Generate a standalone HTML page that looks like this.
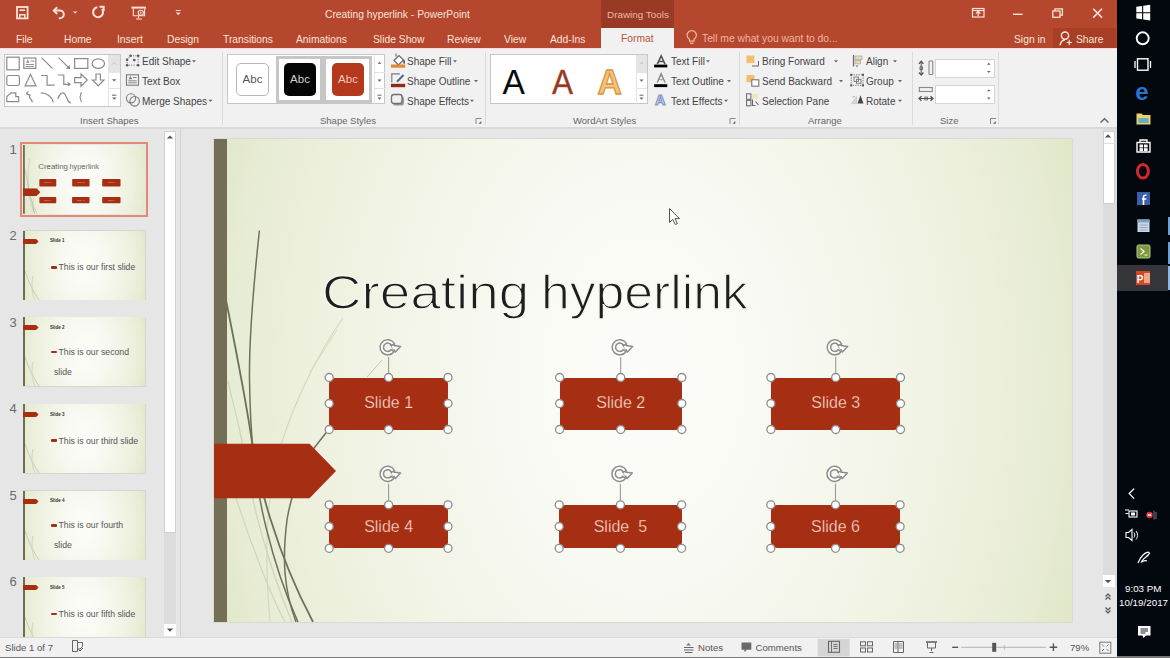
<!DOCTYPE html>
<html><head><meta charset="utf-8">
<style>
*{margin:0;padding:0;box-sizing:border-box}
html,body{width:1170px;height:658px;overflow:hidden;background:#e6e6e6;font-family:"Liberation Sans",sans-serif}
.a{position:absolute}
.t{position:absolute;white-space:nowrap;line-height:1}
#title{left:0;top:0;width:1117px;height:48px;background:#b4472d}
.tab{color:#fbe3da;font-size:10.3px;top:34.5px}
.rb{color:#444;font-size:10px}
.lbl{color:#666;font-size:9.5px;top:116px}
.sep{position:absolute;top:52px;width:1px;height:73px;background:#dadada}
.gal{position:absolute;background:#fff;border:1px solid #c6c6c6}
.scr{position:absolute;background:#fff;border-left:1px solid #dcdcdc}
.thumb{position:absolute;left:23px;width:122px;height:69px;border:1px solid #d4d4d4;overflow:hidden;
 background:radial-gradient(ellipse at 50% 55%,#fdfdf8 0%,#f3f4e8 50%,#e3e8c8 100%)}
.tnum{position:absolute;left:9.5px;color:#666;font-size:13px;line-height:1}
.shape{position:absolute;background:#a62e12;border-radius:6px;color:#f6d4c6;font-size:15.3px;text-align:center}
.h{position:absolute;width:9px;height:9px;border-radius:50%;background:#fff;border:1.3px solid #8a8a8a}
</style></head><body>

<!-- TITLE BAR -->
<div id="title" class="a"></div>
<div class="a" style="left:601px;top:0;width:73px;height:28px;background:#983a24"></div>
<div class="t" style="left:607px;top:9.6px;font-size:9.9px;color:#eab9a8">Drawing Tools</div>
<div class="t" style="left:325px;top:10px;font-size:10.3px;color:#fbe3da">Creating hyperlink - PowerPoint</div>


<div class="a" style="left:1053px;top:28px;width:63px;height:20px;background:#a63f25"></div>
<svg class="a" style="left:0;top:0" width="1117" height="48" fill="none" stroke="#fbe2d8" stroke-width="1.4">
 <!-- save -->
 <rect x="17" y="7" width="10.6" height="11.4" stroke-width="1.8"/>
 <path d="M19.5 10.2h5.6" stroke-width="1.6"/>
 <path d="M19.8 18.3v-3.6h5v3.6" stroke-width="1.5"/>
 <!-- undo -->
 <path d="M54 10.6h6a3.8 3.8 0 0 1 0 7.6h-1.2" stroke-width="2"/>
 <path d="M57.2 7.2l-3.4 3.4l3.4 3.4" stroke-width="2"/>
 <path d="M72.8 11.4h4.7l-2.35 2.2z" fill="#fbe2d8" stroke="none"/>
 <!-- redo (circular) -->
 <path d="M102 9.2a5 5 0 1 1 -4.6 -1.9" stroke-width="2.1"/>
 <path d="M99.5 6.8h4.2v4.2" stroke-width="1.9"/>
 <!-- present from start -->
 <path d="M131.5 7.6h14.4" stroke-width="2"/>
 <path d="M133.3 8.5v7.3h11.3v-7.3" stroke-width="1.1"/>
 <circle cx="140.8" cy="12.8" r="2.6" stroke-width="1.1"/>
 <path d="M140 11.6l2 1.2l-2 1.2z" fill="#fbe2d8" stroke="none"/>
 <path d="M138.5 16v2.5M136 19h6" stroke-width="1"/>
 <!-- customize -->
 <path d="M175.8 10.5h4.8" stroke-width="1"/>
 <path d="M175.8 12.6h4.8l-2.4 2.7z" fill="#fbe2d8" stroke="none"/>
 <!-- ribbon display options -->
 <rect x="972.5" y="8.5" width="11.5" height="8.5" stroke-width="1.2"/>
 <path d="M972.5 10.5h11.5" stroke-width="1.2"/>
 <path d="M978.2 16v-4.5M976 13.5l2.2-2.2l2.2 2.2" stroke-width="1.2"/>
 <!-- minimize -->
 <path d="M1013 14.3h9.6" stroke-width="1.4"/>
 <!-- restore -->
 <rect x="1052.8" y="11" width="7.2" height="6.3" stroke-width="1.3"/>
 <path d="M1055 11v-2.2h7.4v6.4h-2.4" stroke-width="1.3"/>
 <!-- close -->
 <path d="M1093.2 8.8l8.8 8.8M1102 8.8l-8.8 8.8" stroke-width="1.6"/>
 <!-- lightbulb -->
 <path d="M689.5 41.2v-2a4.6 4.6 0 1 1 4.5 0v2z" stroke="#f2b5a2" stroke-width="1.2"/>
 <path d="M690 43.3h3.6" stroke="#f2b5a2" stroke-width="1.2"/>
 <!-- person -->
 <circle cx="1065" cy="35.6" r="3.6" stroke-width="1.5"/>
 <path d="M1060 45.2c0.8-3.2 2.6-5.3 5-5.5" stroke-width="1.5"/>
 <path d="M1066.5 42.5h5.5M1069.2 39.8v5.5" stroke-width="1.2"/>
</svg>

<!-- tabs -->
<div class="t tab" style="left:16px">File</div>
<div class="t tab" style="left:64px">Home</div>
<div class="t tab" style="left:117px">Insert</div>
<div class="t tab" style="left:167px">Design</div>
<div class="t tab" style="left:223px">Transitions</div>
<div class="t tab" style="left:296px">Animations</div>
<div class="t tab" style="left:373px">Slide Show</div>
<div class="t tab" style="left:447px">Review</div>
<div class="t tab" style="left:504px">View</div>
<div class="t tab" style="left:550px">Add-Ins</div>
<div class="a" style="left:601px;top:28px;width:73px;height:22px;background:#f1f1f1"></div>
<div class="t" style="left:621px;top:34px;font-size:10.3px;color:#b9553c">Format</div>
<div class="t" style="left:702px;top:34px;font-size:10.3px;color:#f2b5a2">Tell me what you want to do...</div>
<div class="t tab" style="left:1014px">Sign in</div>

<div class="t tab" style="left:1076px">Share</div>

<!-- RIBBON -->
<div class="a" style="left:0;top:48px;width:1117px;height:79px;background:#f1f1f1;border-top:1px solid #f6dcd4"></div>
<div class="a" style="left:0;top:127px;width:1117px;height:2px;background:#d8d8d8"></div>
<div class="a" style="left:601px;top:48px;width:73px;height:1px;background:#f1f1f1"></div>

<!-- Insert shapes -->
<div class="gal" style="left:4px;top:54px;width:117px;height:53px"></div>
<div class="a" style="left:108px;top:55px;width:1px;height:51px;background:#e4e4e4"></div><div class="a" style="left:109px;top:55px;width:11px;height:18px;background:#e4e4e4"></div><div class="a" style="left:109px;top:88px;width:11px;height:1px;background:#e4e4e4"></div>
<div class="t lbl" style="left:80px">Insert Shapes</div>
<svg class="a" style="left:0;top:48px" width="222" height="79" fill="none" stroke="#8a8a8a" stroke-width="1.2">
 <g transform="translate(0,-48)">
 <!-- row1 -->
 <rect x="6.8" y="57.2" width="12.4" height="12.6"/>
 <rect x="23.8" y="58" width="12" height="10.4"/>
 <path d="M25.5 64.5h8.5M25.5 66.5h8.5" stroke-width="0.9"/>
 <path d="M26 62.8l1.8-3.2l1.8 3.2z" fill="#8a8a8a" stroke="none"/>
 <path d="M30.5 61h4" stroke-width="0.9"/>
 <path d="M41.5 57.6l11.1 11"/>
 <path d="M58.6 57.6l10.5 10.5"/>
 <path d="M70.2 69.2l-0.6-4.3l-3.7 3.7z" fill="#8a8a8a" stroke="none"/>
 <rect x="74.6" y="58.6" width="13.2" height="9.8"/>
 <ellipse cx="98.3" cy="63.6" rx="6.2" ry="4.8"/>
 <!-- row2 -->
 <rect x="6.8" y="75.5" width="12.6" height="10" rx="1.8"/>
 <path d="M30.5 74.3l-5.4 11.5h10.8z"/>
 <path d="M41.1 75.5h6v9.7h7.5"/>
 <path d="M57.8 75h6v9.3h5"/>
 <path d="M71.2 84.3l-3.4-2.2v4.4z" fill="#8a8a8a" stroke="none"/>
 <path d="M74.6 77.6h6.4v-3.6l6.2 6.1l-6.2 6.1v-3.6h-6.4z"/>
 <path d="M96 74h4.4v6h3.6l-5.8 6l-5.8-6h3.6z"/>
 <!-- row3 -->
 <path d="M6.8 101.7v-5.2l4.2-3.6h4.8v3.8h2.8v5z"/>
 <path d="M28.5 91.5c-2.5 1.5-2.5 3 0.5 3.2c2.8 0.3-1 2.2 1 3.5c2 1.2 1.5 2.5 2.5 4" stroke-width="1.3"/>
 <path d="M40.8 92.8c5.5 0 11 3.5 12.6 9.5"/>
 <path d="M57.8 98.8c1.5-4 3-6 5-6c2.5 0 3.5 4 4.5 6.5c1 2.5 2 3.5 3.5 3.5"/>
 <path d="M81.8 92.6c-1.2 0.3-1.3 1.5-1.3 3c0 1.2-0.3 1.5-1 1.6c0.7 0.1 1 0.4 1 1.6c0 1.5 0.1 2.8 1.3 3.1" stroke-width="1.1"/>
 <!-- scroll arrows -->
 <path d="M112 64.6l2.2-2.2l2.2 2.2" stroke="#c4c4c4" stroke-width="1"/>
 <path d="M112 79.2h4.4l-2.2 2.4z" fill="#666" stroke="none"/>
 <path d="M112 95.2h4.4" stroke="#666" stroke-width="1"/>
 <path d="M112 97.4h4.4l-2.2 2.4z" fill="#666" stroke="none"/>
 </g>
</svg>

<div class="t rb" style="left:142px;top:57px">Edit Shape</div>
<div class="t rb" style="left:142px;top:76.7px">Text Box</div>
<div class="t rb" style="left:142px;top:96.7px">Merge Shapes</div>

<svg class="a" style="left:120px;top:48px" width="102" height="79" fill="none" stroke="#7a7a7a" stroke-width="1.1">
 <g transform="translate(-120,-48)">
 <path d="M130.5 55.8h7.7M127.1 59.7v5.5h11.1v-9.4M127.1 59.7l3.4-3.9" stroke-dasharray="1.2 1.2" stroke="#6a6a6a" stroke-width="0.9"/>
 <g fill="#4f5b66" stroke="none">
 <circle cx="130.5" cy="55.8" r="1.3"/><circle cx="138.2" cy="55.8" r="1.3"/><circle cx="127.1" cy="59.7" r="1.3"/>
 <circle cx="134.3" cy="60.1" r="1.3"/><circle cx="127.1" cy="65.2" r="1.3"/><circle cx="138.2" cy="65.2" r="1.3"/>
 </g>
 <rect x="126.5" y="74.8" width="12" height="10.4"/>
 <path d="M128.3 80.8h8.5M128.3 82.8h8.5" stroke-width="0.9"/>
 <path d="M128.6 79.2l1.8-3.2l1.8 3.2z" fill="#7a7a7a" stroke="none"/>
 <path d="M133 77.5h3.6" stroke-width="0.9"/>
 <circle cx="131" cy="98.3" r="4.6"/>
 <circle cx="134.6" cy="101.3" r="4.8"/>
 <g fill="#666" stroke="none">
 <path d="M192 60.3h4l-2 2.2z"/>
 <path d="M208.5 99.8h4l-2 2.2z"/>
 </g>
 </g>
</svg>
<div class="sep" style="left:222px"></div>

<!-- Shape styles -->
<div class="gal" style="left:227px;top:54px;width:158px;height:50px"></div>

<div class="a" style="left:236px;top:63px;width:33px;height:33px;border:1px solid #b8b8b8;border-radius:5px;background:#fff"></div>
<div class="t" style="left:236px;width:33px;text-align:center;top:73.5px;font-size:11.5px;color:#555">Abc</div>
<div class="a" style="left:276px;top:56px;width:96px;height:47px;background:#c6c6c6"></div>
<div class="a" style="left:279px;top:59px;width:41px;height:41px;background:#fff"></div>
<div class="a" style="left:326px;top:59px;width:43px;height:41px;background:#fff"></div>
<div class="a" style="left:284px;top:63px;width:32px;height:33px;border-radius:5px;background:#050505"></div>
<div class="t" style="left:284px;width:32px;text-align:center;top:73.5px;font-size:11.5px;color:#d0d0d0">Abc</div>
<div class="a" style="left:332px;top:63px;width:32px;height:33px;border-radius:5px;background:#b3381c"></div>
<div class="t" style="left:332px;width:32px;text-align:center;top:73.5px;font-size:11.5px;color:#f3c8b8">Abc</div>
<div class="a" style="left:374px;top:55px;width:1px;height:49px;background:#e4e4e4"></div>
<div class="a" style="left:375px;top:72px;width:10px;height:1px;background:#e4e4e4"></div>
<div class="a" style="left:375px;top:88px;width:10px;height:1px;background:#e4e4e4"></div>
<svg class="a" style="left:374px;top:54px" width="12" height="52" fill="#666">
 <path d="M3.5 9.8l2-2l2 2z"/>
 <path d="M3.5 25.5h4l-2 2.2z"/>
 <path d="M3.5 41.2h4" stroke="#666" stroke-width="1"/>
 <path d="M3.5 43.5h4l-2 2.2z"/>
</svg>
<div class="t lbl" style="left:320px">Shape Styles</div>
<div class="t rb" style="left:407px;top:57px">Shape Fill</div>
<div class="t rb" style="left:407px;top:76.7px">Shape Outline</div>
<div class="t rb" style="left:407px;top:96.7px">Shape Effects</div>
<div class="sep" style="left:485px"></div>

<!-- WordArt -->
<div class="gal" style="left:490px;top:54px;width:158px;height:50px"></div>
<div class="t lbl" style="left:573px">WordArt Styles</div>
<div class="t rb" style="left:671px;top:57px">Text Fill</div>
<div class="t rb" style="left:671px;top:76.7px">Text Outline</div>
<div class="t rb" style="left:671px;top:96.7px">Text Effects</div>

<svg class="a" style="left:386px;top:48px" width="100" height="79" fill="none">
 <g transform="translate(-386,-48)">
 <!-- bucket -->
 <path d="M394 60.5l5-5l4.5 4.5l-5 5z" stroke="#666" stroke-width="1.2" fill="#fff"/>
 <path d="M396 56.5v-3" stroke="#666" stroke-width="1.1"/>
 <path d="M403.5 60c1 1.5 1 3 0 3.5" stroke="#555" stroke-width="1.5"/>
 <rect x="391" y="64.5" width="14.2" height="3.2" fill="#e08b32"/>
 <!-- outline -->
 <path d="M391.8 82.5v-8.6h8" stroke="#777" stroke-width="1.1"/>
 <path d="M403.5 75l-6.5 6.8" stroke="#4d6f8e" stroke-width="2"/>
 <rect x="391" y="83.8" width="14.2" height="3.4" fill="#8d2b1b"/>
 <!-- effects -->
 <rect x="393" y="96" width="11" height="9.5" rx="2.5" fill="#9a9a9a"/>
 <rect x="391.5" y="94.5" width="10.5" height="9" rx="2.5" fill="#f0f0f0" stroke="#707070" stroke-width="1.3"/>
 <!-- dropdowns -->
 <g fill="#666">
 <path d="M453 60.3h4l-2 2.2z"/>
 <path d="M474 80h4l-2 2.2z"/>
 <path d="M470 99.8h4l-2 2.2z"/>
 </g>
 <!-- launcher -->
 <path d="M476 124v-5.5h5.5" stroke="#888" stroke-width="1"/>
 <path d="M478.5 123.8l2.8-2.8v2.8z" fill="#666"/>
 </g>
</svg>
<svg class="a" style="left:490px;top:54px" width="160" height="52">
 <text x="12.5" y="40.5" font-family="Liberation Sans" font-size="35" fill="#0a0a0a" transform="translate(13,0) scale(0.96,1) translate(-13,0)">A</text>
 <text x="62" y="40.5" font-family="Liberation Sans" font-size="35" fill="#923623" stroke="#b55a44" stroke-width="0.5" transform="translate(62,0) scale(0.9,1) translate(-62,0)">A</text>
 <text x="107.5" y="40.5" font-family="Liberation Sans" font-size="35" font-weight="bold" fill="#f7c27a" stroke="#d69540" stroke-width="1.3" transform="translate(107.5,0) scale(0.96,1) translate(-107.5,0)">A</text>
</svg>
<div class="a" style="left:636px;top:55px;width:1px;height:49px;background:#e4e4e4"></div>
<div class="a" style="left:637px;top:55px;width:10px;height:18px;background:#e4e4e4"></div>
<div class="a" style="left:637px;top:88px;width:10px;height:1px;background:#e4e4e4"></div>
<svg class="a" style="left:636px;top:54px" width="12" height="52" fill="#666">
 <path d="M3.5 9.8l2-2l2 2z" fill="#c4c4c4"/>
 <path d="M3.5 25.5h4l-2 2.2z"/>
 <path d="M3.5 41.2h4" stroke="#666" stroke-width="1"/>
 <path d="M3.5 43.5h4l-2 2.2z"/>
</svg>
<svg class="a" style="left:650px;top:48px" width="90" height="79" fill="none">
 <g transform="translate(-650,-48)">
 <path d="M657.3 64.2l3.85-8.3l3.85 8.3M658.6 61.5h5" stroke="#555" stroke-width="1.6"/>
 <rect x="654.1" y="64.6" width="13.2" height="2.8" fill="#000"/>
 <path d="M657.3 82.5l3.85-8.6l3.85 8.6M658.6 79.5h5" stroke="#888" stroke-width="1.5"/>
 <path d="M658.8 82.5l2.35-5.5l2.35 5.5" stroke="#fff" stroke-width="0.6"/>
 <rect x="654.1" y="84.2" width="13.2" height="2.9" fill="#000"/>
 <text x="655" y="104.8" font-family="Liberation Sans" font-size="14.5" font-weight="bold" fill="#dfe6f6" stroke="#7f92c8" stroke-width="1.1">A</text>
 <g fill="#666">
 <path d="M706 60.3h4l-2 2.2z"/>
 <path d="M727 80h4l-2 2.2z"/>
 <path d="M724 99.8h4l-2 2.2z"/>
 </g>
 <path d="M730 124v-5.5h5.5" stroke="#888" stroke-width="1"/>
 <path d="M732.5 123.8l2.8-2.8v2.8z" fill="#666"/>
 </g>
</svg>
<div class="sep" style="left:739px"></div>

<!-- Arrange -->
<div class="t rb" style="left:762px;top:57px">Bring Forward</div>
<div class="t rb" style="left:762px;top:76.7px">Send Backward</div>
<div class="t rb" style="left:762px;top:96.7px">Selection Pane</div>
<div class="t rb" style="left:866px;top:57px">Align</div>
<div class="t rb" style="left:866px;top:76.7px">Group</div>
<div class="t rb" style="left:866px;top:96.7px">Rotate</div>
<div class="t lbl" style="left:808px">Arrange</div>
<div class="sep" style="left:912px"></div>

<!-- Size -->
<div class="a" style="left:935px;top:59px;width:60px;height:19px;background:#fff;border:1px solid #d4d4d4"></div>
<div class="a" style="left:935px;top:85px;width:60px;height:19px;background:#fff;border:1px solid #d4d4d4"></div>
<div class="t lbl" style="left:940px">Size</div>
<div class="sep" style="left:998px"></div>


<svg class="a" style="left:740px;top:48px" width="377" height="79" fill="none">
 <g transform="translate(-740,-48)">
 <!-- bring forward -->
 <path d="M758.5 61v5h-6.5" stroke="#666" stroke-width="1"/>
 <rect x="746.4" y="55.5" width="8" height="7.6" fill="#f0c070"/>
 <!-- send backward -->
 <rect x="746.4" y="75" width="8" height="7.2" fill="#f0c070"/>
 <rect x="751.8" y="79.8" width="7" height="6.4" fill="#fff" stroke="#666" stroke-width="1"/>
 <!-- selection pane -->
 <rect x="746.6" y="93.8" width="4.3" height="5.5" stroke="#666" stroke-width="1"/>
 <rect x="746.6" y="100.3" width="4.3" height="5.5" stroke="#666" stroke-width="1"/>
 <rect x="752" y="94" width="6" height="4.5" fill="#f5e3c0"/>
 <path d="M752.5 99.5v6h3M755.5 101.5l3 3.5" stroke="#666" stroke-width="1.1"/>
 <g fill="#666">
 <path d="M834 60.3h4l-2 2.2z"/>
 <path d="M839 80h4l-2 2.2z"/>
 <path d="M893 60.3h4l-2 2.2z"/>
 <path d="M898 80h4l-2 2.2z"/>
 <path d="M898 99.8h4l-2 2.2z"/>
 </g>
 <!-- align -->
 <path d="M853.5 55v11.5" stroke="#666" stroke-width="1.2"/>
 <rect x="855" y="56" width="7" height="3.4" fill="#e9dcb0" stroke="#999" stroke-width="0.6"/>
 <rect x="855" y="60.5" width="5.5" height="3.4" fill="#e9dcb0" stroke="#999" stroke-width="0.6"/>
 <path d="M855.5 65.5h3l-1.5 1.8z" fill="#4a78b8"/>
 <!-- group -->
 <rect x="851.2" y="74.8" width="11.8" height="10.5" stroke="#666" stroke-width="0.9" stroke-dasharray="1.3 1.1"/>
 <rect x="854" y="77" width="4.5" height="4.5" stroke="#777" stroke-width="0.9"/>
 <rect x="856.5" y="79.3" width="4.5" height="4" stroke="#777" stroke-width="0.9"/>
 <g fill="#555"><rect x="850.2" y="73.8" width="2" height="2"/><rect x="862" y="73.8" width="2" height="2"/><rect x="850.2" y="84.4" width="2" height="2"/><rect x="862" y="84.4" width="2" height="2"/></g>
 <!-- rotate -->
 <path d="M857.5 103.6l6-0.2l-3-8.2z" fill="#444"/>
 <path d="M851.5 103.6h5v-7z" fill="#d8d8d8" stroke="#bbb" stroke-width="0.6"/>
 <path d="M853 97.5l1.5-1.5" stroke="#777" stroke-width="0.9"/>
 <!-- size icons -->
 <path d="M921.2 62v12" stroke="#555" stroke-width="1"/>
 <path d="M919 63.8l2.2-2.4l2.2 2.4M919 72.5l2.2 2.4l2.2-2.4" stroke="#555" stroke-width="1.4"/>
 <rect x="920" y="66.8" width="2.6" height="2.8" stroke="#555" stroke-width="0.8"/>
 <rect x="929" y="61" width="3.8" height="13.5" rx="0.8" stroke="#888" stroke-width="1.1"/>
 <rect x="919.3" y="87.5" width="13" height="4" stroke="#888" stroke-width="1.1"/>
 <path d="M919.5 98.5h13" stroke="#555" stroke-width="1"/>
 <path d="M921.5 96.3l-2.4 2.2l2.4 2.2M930.5 96.3l2.4 2.2l-2.4 2.2" stroke="#555" stroke-width="1.4"/>
 <rect x="924.8" y="97.1" width="2.8" height="2.8" stroke="#555" stroke-width="0.8"/>
 <g fill="#666">
 <path d="M987 64.8l1.8-2l1.8 2z"/>
 <path d="M987 71h3.6l-1.8 2z"/>
 <path d="M987 91.2l1.8-2l1.8 2z"/>
 <path d="M987 97.6h3.6l-1.8 2z"/>
 </g>
 <path d="M990.5 124v-5.5h5.5" stroke="#888" stroke-width="1"/>
 <path d="M993 123.8l2.8-2.8v2.8z" fill="#666"/>
 <!-- collapse caret -->
 <path d="M1100.5 122.5l4-3.8l4 3.8" stroke="#666" stroke-width="1.4"/>
 </g>
</svg>

<!-- LEFT PANE -->
<div class="a" style="left:164px;top:131px;width:12px;height:505px;background:#dcdcdc"></div>
<div class="a" style="left:164px;top:131px;width:12px;height:402px;background:#fff;border:1px solid #cfcfcf"></div>
<div class="a" style="left:164px;top:624px;width:12px;height:12px;background:#fff"></div>
<svg class="a" style="left:164px;top:131px" width="12" height="505" fill="#555"><path d="M2.8 7.6l3.2-3.2l3.2 3.2z"/><path d="M2.8 497.5h6.4l-3.2 3.2z"/></svg>
<div class="a" style="left:180px;top:129px;width:1px;height:507px;background:#d2d2d2"></div>
<div class="tnum" style="top:143.4px;color:#6a6a6a">1</div>
<div class="a" style="left:20px;top:142px;width:128px;height:74.5px;border:2.5px solid #e48a72"></div>
<div class="a" style="left:23px;top:145px;width:122px;height:69px;overflow:hidden;background:radial-gradient(ellipse 55% 140% at 50% 50%,#fcfdf9 0%,#fbfcf7 10%,#f7f8f0 35%,#eef1df 70%,#e7ecd4 87%,#e2e8ca 95%,#dfe5c4 100%)"><div class="a" style="left:0;top:0;width:858px;height:483px;transform:scale(0.14219);transform-origin:0 0"><svg class="a" style="left:0;top:0" width="858" height="483" fill="none"><g transform="translate(-214,-139)">
 <path d="M343 318C320 350 295 400 282 442C270 480 262 530 270 622" stroke="#d3d7bf" stroke-width="1.1"/>
 <path d="M228 381C232 400 238 420 242 442C250 500 270 570 292 622" stroke="#cfd3b8" stroke-width="1.2"/>
 <path d="M236 498C250 540 268 590 285 622" stroke="#d0d4bb" stroke-width="1.2"/>
 <path d="M259.4 230.5C253 290 249 340 249.5 380C250 410 251 430 253 450C256 490 270 560 298 622" stroke="#6f7258" stroke-width="1.5"/>
 <path d="M226 300C236 350 246 400 252 442C258 480 275 550 313 622" stroke="#6f7258" stroke-width="1.8"/>
 <path d="M329 429L311 452C300 470 292 490 287 520C282 560 284 590 296 622" stroke="#6f7258" stroke-width="1.5"/>
 <path d="M382 360L367 377" stroke="#c3c7ab" stroke-width="1"/>
 <path d="M337 330L310 372" stroke="#d6dac4" stroke-width="1"/>
</g></svg>
<div class="a" style="left:0;top:0;width:13px;height:483px;background:#736e56"></div>
<svg class="a" style="left:0;top:304px" width="124" height="56"><path d="M0 0.7H95.5L122 28L95.5 55.3H0z" fill="#a62e12"/></svg>
<div class="t" style="left:107.5px;top:130px;font-size:48px;color:#1e1e1e;-webkit-text-stroke:1.3px #f6f7ef;transform:scaleX(1.142);transform-origin:0 0">Creating</div>
<div class="t" style="left:327px;top:130px;font-size:48px;color:#1e1e1e;-webkit-text-stroke:1.3px #f6f7ef;transform:scaleX(1.077);transform-origin:0 0">hyperlink</div>
<div class="shape" style="left:115.2px;top:238.5px;width:118.8px;height:52.0px"></div>
<div class="t" style="left:115.2px;width:118.8px;top:256.4px;text-align:center;font-size:16px;color:#f8d6c8;-webkit-text-stroke:0.25px #a62e12">Slide 1</div>
<div class="shape" style="left:345.6px;top:238.5px;width:122.2px;height:52.0px"></div>
<div class="t" style="left:345.6px;width:122.2px;top:256.4px;text-align:center;font-size:16px;color:#f8d6c8;-webkit-text-stroke:0.25px #a62e12">Slide 2</div>
<div class="shape" style="left:556.9px;top:238.5px;width:129.6px;height:52.0px"></div>
<div class="t" style="left:556.9px;width:129.6px;top:256.4px;text-align:center;font-size:16px;color:#f8d6c8;-webkit-text-stroke:0.25px #a62e12">Slide 3</div>
<div class="shape" style="left:115.2px;top:365.8px;width:118.8px;height:43.5px"></div>
<div class="t" style="left:115.2px;width:118.8px;top:380.4px;text-align:center;font-size:16px;color:#f8d6c8;-webkit-text-stroke:0.25px #a62e12">Slide 4</div>
<div class="shape" style="left:345.2px;top:365.8px;width:122.4px;height:43.5px"></div>
<div class="t" style="left:345.2px;width:122.4px;top:380.4px;text-align:center;font-size:16px;color:#f8d6c8;-webkit-text-stroke:0.25px #a62e12">Slide&nbsp; 5</div>
<div class="shape" style="left:556.8px;top:365.8px;width:129.3px;height:43.5px"></div>
<div class="t" style="left:556.8px;width:129.3px;top:380.4px;text-align:center;font-size:16px;color:#f8d6c8;-webkit-text-stroke:0.25px #a62e12">Slide 6</div></div></div>
<div class="tnum" style="top:229.0px;color:#6a6a6a">2</div>
<div class="a" style="left:22.5px;top:230.3px;width:123px;height:70px;background:#d6d6d0"></div>
<div class="a" style="left:23px;top:230.8px;width:122px;height:69px;overflow:hidden;background:radial-gradient(ellipse 55% 140% at 50% 50%,#fcfdf9 0%,#fbfcf7 10%,#f7f8f0 35%,#eef1df 70%,#e7ecd4 87%,#e2e8ca 95%,#dfe5c4 100%)"><svg class="a" style="left:0;top:0" width="122" height="69" fill="none"><path d="M2 40C6 52 10 60 16 69" stroke="#c9cdb2" stroke-width="1"/><path d="M10 45C8 55 9 62 12 69" stroke="#d2d6bf" stroke-width="1"/></svg><div class="a" style="left:0;top:0;width:2px;height:69px;background:#6f6b55"></div><svg class="a" style="left:0;top:8px" width="17" height="6"><path d="M0 0H13L15.6 2.5L13 5H0z" fill="#a62e12"/></svg><div class="t" style="left:27px;top:8.5px;font-size:4.5px;color:#333;font-weight:bold">Slide 1</div><div class="a" style="left:28px;top:35.4px;width:6px;height:2.4px;border-radius:1px;background:#a62e12"></div><div class="t" style="left:35.5px;top:32.6px;font-size:8.7px;color:#555">This is our first slide</div></div>
<div class="tnum" style="top:315.6px;color:#6a6a6a">3</div>
<div class="a" style="left:22.5px;top:316.9px;width:123px;height:70px;background:#d6d6d0"></div>
<div class="a" style="left:23px;top:317.4px;width:122px;height:69px;overflow:hidden;background:radial-gradient(ellipse 55% 140% at 50% 50%,#fcfdf9 0%,#fbfcf7 10%,#f7f8f0 35%,#eef1df 70%,#e7ecd4 87%,#e2e8ca 95%,#dfe5c4 100%)"><svg class="a" style="left:0;top:0" width="122" height="69" fill="none"><path d="M2 40C6 52 10 60 16 69" stroke="#c9cdb2" stroke-width="1"/><path d="M10 45C8 55 9 62 12 69" stroke="#d2d6bf" stroke-width="1"/></svg><div class="a" style="left:0;top:0;width:2px;height:69px;background:#6f6b55"></div><svg class="a" style="left:0;top:8px" width="17" height="6"><path d="M0 0H13L15.6 2.5L13 5H0z" fill="#a62e12"/></svg><div class="t" style="left:27px;top:8.5px;font-size:4.5px;color:#333;font-weight:bold">Slide 2</div><div class="a" style="left:28px;top:33.6px;width:6px;height:2.4px;border-radius:1px;background:#a62e12"></div><div class="t" style="left:35.5px;top:30.8px;font-size:8.7px;color:#555">This is our second</div><div class="t" style="left:31px;top:50.4px;font-size:8.7px;color:#555">slide</div></div>
<div class="tnum" style="top:402.2px;color:#6a6a6a">4</div>
<div class="a" style="left:22.5px;top:403.5px;width:123px;height:70px;background:#d6d6d0"></div>
<div class="a" style="left:23px;top:404px;width:122px;height:69px;overflow:hidden;background:radial-gradient(ellipse 55% 140% at 50% 50%,#fcfdf9 0%,#fbfcf7 10%,#f7f8f0 35%,#eef1df 70%,#e7ecd4 87%,#e2e8ca 95%,#dfe5c4 100%)"><svg class="a" style="left:0;top:0" width="122" height="69" fill="none"><path d="M2 40C6 52 10 60 16 69" stroke="#c9cdb2" stroke-width="1"/><path d="M10 45C8 55 9 62 12 69" stroke="#d2d6bf" stroke-width="1"/></svg><div class="a" style="left:0;top:0;width:2px;height:69px;background:#6f6b55"></div><svg class="a" style="left:0;top:8px" width="17" height="6"><path d="M0 0H13L15.6 2.5L13 5H0z" fill="#a62e12"/></svg><div class="t" style="left:27px;top:8.5px;font-size:4.5px;color:#333;font-weight:bold">Slide 3</div><div class="a" style="left:28px;top:35.4px;width:6px;height:2.4px;border-radius:1px;background:#a62e12"></div><div class="t" style="left:35.5px;top:32.6px;font-size:8.7px;color:#555">This is our third slide</div></div>
<div class="tnum" style="top:488.8px;color:#6a6a6a">5</div>
<div class="a" style="left:22.5px;top:490.1px;width:123px;height:70px;background:#d6d6d0"></div>
<div class="a" style="left:23px;top:490.6px;width:122px;height:69px;overflow:hidden;background:radial-gradient(ellipse 55% 140% at 50% 50%,#fcfdf9 0%,#fbfcf7 10%,#f7f8f0 35%,#eef1df 70%,#e7ecd4 87%,#e2e8ca 95%,#dfe5c4 100%)"><svg class="a" style="left:0;top:0" width="122" height="69" fill="none"><path d="M2 40C6 52 10 60 16 69" stroke="#c9cdb2" stroke-width="1"/><path d="M10 45C8 55 9 62 12 69" stroke="#d2d6bf" stroke-width="1"/></svg><div class="a" style="left:0;top:0;width:2px;height:69px;background:#6f6b55"></div><svg class="a" style="left:0;top:8px" width="17" height="6"><path d="M0 0H13L15.6 2.5L13 5H0z" fill="#a62e12"/></svg><div class="t" style="left:27px;top:8.5px;font-size:4.5px;color:#333;font-weight:bold">Slide 4</div><div class="a" style="left:28px;top:33.6px;width:6px;height:2.4px;border-radius:1px;background:#a62e12"></div><div class="t" style="left:35.5px;top:30.8px;font-size:8.7px;color:#555">This is our fourth</div><div class="t" style="left:31px;top:50.4px;font-size:8.7px;color:#555">slide</div></div>
<div class="tnum" style="top:575.4px;color:#6a6a6a">6</div>
<div class="a" style="left:22.5px;top:576.7px;width:123px;height:70px;background:#d6d6d0"></div>
<div class="a" style="left:23px;top:577.2px;width:122px;height:69px;overflow:hidden;background:radial-gradient(ellipse 55% 140% at 50% 50%,#fcfdf9 0%,#fbfcf7 10%,#f7f8f0 35%,#eef1df 70%,#e7ecd4 87%,#e2e8ca 95%,#dfe5c4 100%)"><svg class="a" style="left:0;top:0" width="122" height="69" fill="none"><path d="M2 40C6 52 10 60 16 69" stroke="#c9cdb2" stroke-width="1"/><path d="M10 45C8 55 9 62 12 69" stroke="#d2d6bf" stroke-width="1"/></svg><div class="a" style="left:0;top:0;width:2px;height:69px;background:#6f6b55"></div><svg class="a" style="left:0;top:8px" width="17" height="6"><path d="M0 0H13L15.6 2.5L13 5H0z" fill="#a62e12"/></svg><div class="t" style="left:27px;top:8.5px;font-size:4.5px;color:#333;font-weight:bold">Slide 5</div><div class="a" style="left:28px;top:35.4px;width:6px;height:2.4px;border-radius:1px;background:#a62e12"></div><div class="t" style="left:35.5px;top:32.6px;font-size:8.7px;color:#555">This is our fifth slide</div></div>
<!-- MAIN SLIDE -->
<div class="a" style="left:213px;top:138px;width:860px;height:485px;background:#d9dad2"></div>
<div class="a" style="left:214px;top:139px;width:858px;height:483px;overflow:hidden;background:radial-gradient(ellipse 55% 140% at 50% 50%,#fcfdf9 0%,#fbfcf7 10%,#f7f8f0 35%,#eef1df 70%,#e7ecd4 87%,#e2e8ca 95%,#dfe5c4 100%)">
<svg class="a" style="left:0;top:0" width="858" height="483" fill="none"><g transform="translate(-214,-139)">
 <path d="M343 318C320 350 295 400 282 442C270 480 262 530 270 622" stroke="#d3d7bf" stroke-width="1.1"/>
 <path d="M228 381C232 400 238 420 242 442C250 500 270 570 292 622" stroke="#cfd3b8" stroke-width="1.2"/>
 <path d="M236 498C250 540 268 590 285 622" stroke="#d0d4bb" stroke-width="1.2"/>
 <path d="M259.4 230.5C253 290 249 340 249.5 380C250 410 251 430 253 450C256 490 270 560 298 622" stroke="#6f7258" stroke-width="1.5"/>
 <path d="M226 300C236 350 246 400 252 442C258 480 275 550 313 622" stroke="#6f7258" stroke-width="1.8"/>
 <path d="M329 429L311 452C300 470 292 490 287 520C282 560 284 590 296 622" stroke="#6f7258" stroke-width="1.5"/>
 <path d="M382 360L367 377" stroke="#c3c7ab" stroke-width="1"/>
 <path d="M337 330L310 372" stroke="#d6dac4" stroke-width="1"/>
</g></svg>
<div class="a" style="left:0;top:0;width:13px;height:483px;background:#736e56"></div>
<svg class="a" style="left:0;top:304px" width="124" height="56"><path d="M0 0.7H95.5L122 28L95.5 55.3H0z" fill="#a62e12"/></svg>
<div class="t" style="left:107.5px;top:130px;font-size:48px;color:#1e1e1e;-webkit-text-stroke:1.3px #f6f7ef;transform:scaleX(1.142);transform-origin:0 0">Creating</div>
<div class="t" style="left:327px;top:130px;font-size:48px;color:#1e1e1e;-webkit-text-stroke:1.3px #f6f7ef;transform:scaleX(1.077);transform-origin:0 0">hyperlink</div>
<div class="shape" style="left:115.2px;top:238.5px;width:118.8px;height:52.0px"></div>
<div class="t" style="left:115.2px;width:118.8px;top:256.4px;text-align:center;font-size:16px;color:#f8d6c8;-webkit-text-stroke:0.25px #a62e12">Slide 1</div>
<div class="shape" style="left:345.6px;top:238.5px;width:122.2px;height:52.0px"></div>
<div class="t" style="left:345.6px;width:122.2px;top:256.4px;text-align:center;font-size:16px;color:#f8d6c8;-webkit-text-stroke:0.25px #a62e12">Slide 2</div>
<div class="shape" style="left:556.9px;top:238.5px;width:129.6px;height:52.0px"></div>
<div class="t" style="left:556.9px;width:129.6px;top:256.4px;text-align:center;font-size:16px;color:#f8d6c8;-webkit-text-stroke:0.25px #a62e12">Slide 3</div>
<div class="shape" style="left:115.2px;top:365.8px;width:118.8px;height:43.5px"></div>
<div class="t" style="left:115.2px;width:118.8px;top:380.4px;text-align:center;font-size:16px;color:#f8d6c8;-webkit-text-stroke:0.25px #a62e12">Slide 4</div>
<div class="shape" style="left:345.2px;top:365.8px;width:122.4px;height:43.5px"></div>
<div class="t" style="left:345.2px;width:122.4px;top:380.4px;text-align:center;font-size:16px;color:#f8d6c8;-webkit-text-stroke:0.25px #a62e12">Slide&nbsp; 5</div>
<div class="shape" style="left:556.8px;top:365.8px;width:129.3px;height:43.5px"></div>
<div class="t" style="left:556.8px;width:129.3px;top:380.4px;text-align:center;font-size:16px;color:#f8d6c8;-webkit-text-stroke:0.25px #a62e12">Slide 6</div>
<svg class="a" style="left:0;top:0" width="858" height="483" fill="none"><g transform="translate(-214,-139)"><path d="M388.6 357.1V373.5" stroke="#9a9a9a" stroke-width="1.1"/><g transform="translate(387.7,347.3)" stroke="#8c8c8c" stroke-width="1.5" stroke-linejoin="round"><path d="M6.9 -3.2A7.6 7.6 0 1 0 6.2 4.4L3.4 2.4A4.2 4.2 0 1 1 3.8 -1.8z" fill="#fff"/><path d="M3.2 -2.2L12.8 -0.9L7.6 4.6z" fill="#fff"/><path d="M4.6 -1.2L6.4 1.6" stroke="#fff" stroke-width="1.8"/></g><circle cx="329.2" cy="377.5" r="4" fill="#fff" stroke="#8c8c8c" stroke-width="1.3"/><circle cx="388.6" cy="377.5" r="4" fill="#fff" stroke="#8c8c8c" stroke-width="1.3"/><circle cx="448.0" cy="377.5" r="4" fill="#fff" stroke="#8c8c8c" stroke-width="1.3"/><circle cx="329.2" cy="403.5" r="4" fill="#fff" stroke="#8c8c8c" stroke-width="1.3"/><circle cx="448.0" cy="403.5" r="4" fill="#fff" stroke="#8c8c8c" stroke-width="1.3"/><circle cx="329.2" cy="429.5" r="4" fill="#fff" stroke="#8c8c8c" stroke-width="1.3"/><circle cx="388.6" cy="429.5" r="4" fill="#fff" stroke="#8c8c8c" stroke-width="1.3"/><circle cx="448.0" cy="429.5" r="4" fill="#fff" stroke="#8c8c8c" stroke-width="1.3"/><path d="M620.7 357.1V373.5" stroke="#9a9a9a" stroke-width="1.1"/><g transform="translate(619.8,347.3)" stroke="#8c8c8c" stroke-width="1.5" stroke-linejoin="round"><path d="M6.9 -3.2A7.6 7.6 0 1 0 6.2 4.4L3.4 2.4A4.2 4.2 0 1 1 3.8 -1.8z" fill="#fff"/><path d="M3.2 -2.2L12.8 -0.9L7.6 4.6z" fill="#fff"/><path d="M4.6 -1.2L6.4 1.6" stroke="#fff" stroke-width="1.8"/></g><circle cx="559.6" cy="377.5" r="4" fill="#fff" stroke="#8c8c8c" stroke-width="1.3"/><circle cx="620.7" cy="377.5" r="4" fill="#fff" stroke="#8c8c8c" stroke-width="1.3"/><circle cx="681.8" cy="377.5" r="4" fill="#fff" stroke="#8c8c8c" stroke-width="1.3"/><circle cx="559.6" cy="403.5" r="4" fill="#fff" stroke="#8c8c8c" stroke-width="1.3"/><circle cx="681.8" cy="403.5" r="4" fill="#fff" stroke="#8c8c8c" stroke-width="1.3"/><circle cx="559.6" cy="429.5" r="4" fill="#fff" stroke="#8c8c8c" stroke-width="1.3"/><circle cx="620.7" cy="429.5" r="4" fill="#fff" stroke="#8c8c8c" stroke-width="1.3"/><circle cx="681.8" cy="429.5" r="4" fill="#fff" stroke="#8c8c8c" stroke-width="1.3"/><path d="M835.7 357.1V373.5" stroke="#9a9a9a" stroke-width="1.1"/><g transform="translate(834.8,347.3)" stroke="#8c8c8c" stroke-width="1.5" stroke-linejoin="round"><path d="M6.9 -3.2A7.6 7.6 0 1 0 6.2 4.4L3.4 2.4A4.2 4.2 0 1 1 3.8 -1.8z" fill="#fff"/><path d="M3.2 -2.2L12.8 -0.9L7.6 4.6z" fill="#fff"/><path d="M4.6 -1.2L6.4 1.6" stroke="#fff" stroke-width="1.8"/></g><circle cx="770.9" cy="377.5" r="4" fill="#fff" stroke="#8c8c8c" stroke-width="1.3"/><circle cx="835.7" cy="377.5" r="4" fill="#fff" stroke="#8c8c8c" stroke-width="1.3"/><circle cx="900.5" cy="377.5" r="4" fill="#fff" stroke="#8c8c8c" stroke-width="1.3"/><circle cx="770.9" cy="403.5" r="4" fill="#fff" stroke="#8c8c8c" stroke-width="1.3"/><circle cx="900.5" cy="403.5" r="4" fill="#fff" stroke="#8c8c8c" stroke-width="1.3"/><circle cx="770.9" cy="429.5" r="4" fill="#fff" stroke="#8c8c8c" stroke-width="1.3"/><circle cx="835.7" cy="429.5" r="4" fill="#fff" stroke="#8c8c8c" stroke-width="1.3"/><circle cx="900.5" cy="429.5" r="4" fill="#fff" stroke="#8c8c8c" stroke-width="1.3"/><path d="M388.6 483.7V500.8" stroke="#9a9a9a" stroke-width="1.1"/><g transform="translate(387.7,473.9)" stroke="#8c8c8c" stroke-width="1.5" stroke-linejoin="round"><path d="M6.9 -3.2A7.6 7.6 0 1 0 6.2 4.4L3.4 2.4A4.2 4.2 0 1 1 3.8 -1.8z" fill="#fff"/><path d="M3.2 -2.2L12.8 -0.9L7.6 4.6z" fill="#fff"/><path d="M4.6 -1.2L6.4 1.6" stroke="#fff" stroke-width="1.8"/></g><circle cx="329.2" cy="504.8" r="4" fill="#fff" stroke="#8c8c8c" stroke-width="1.3"/><circle cx="388.6" cy="504.8" r="4" fill="#fff" stroke="#8c8c8c" stroke-width="1.3"/><circle cx="448.0" cy="504.8" r="4" fill="#fff" stroke="#8c8c8c" stroke-width="1.3"/><circle cx="329.2" cy="526.5" r="4" fill="#fff" stroke="#8c8c8c" stroke-width="1.3"/><circle cx="448.0" cy="526.5" r="4" fill="#fff" stroke="#8c8c8c" stroke-width="1.3"/><circle cx="329.2" cy="548.3" r="4" fill="#fff" stroke="#8c8c8c" stroke-width="1.3"/><circle cx="388.6" cy="548.3" r="4" fill="#fff" stroke="#8c8c8c" stroke-width="1.3"/><circle cx="448.0" cy="548.3" r="4" fill="#fff" stroke="#8c8c8c" stroke-width="1.3"/><path d="M620.4 483.7V500.8" stroke="#9a9a9a" stroke-width="1.1"/><g transform="translate(619.5,473.9)" stroke="#8c8c8c" stroke-width="1.5" stroke-linejoin="round"><path d="M6.9 -3.2A7.6 7.6 0 1 0 6.2 4.4L3.4 2.4A4.2 4.2 0 1 1 3.8 -1.8z" fill="#fff"/><path d="M3.2 -2.2L12.8 -0.9L7.6 4.6z" fill="#fff"/><path d="M4.6 -1.2L6.4 1.6" stroke="#fff" stroke-width="1.8"/></g><circle cx="559.2" cy="504.8" r="4" fill="#fff" stroke="#8c8c8c" stroke-width="1.3"/><circle cx="620.4" cy="504.8" r="4" fill="#fff" stroke="#8c8c8c" stroke-width="1.3"/><circle cx="681.6" cy="504.8" r="4" fill="#fff" stroke="#8c8c8c" stroke-width="1.3"/><circle cx="559.2" cy="526.5" r="4" fill="#fff" stroke="#8c8c8c" stroke-width="1.3"/><circle cx="681.6" cy="526.5" r="4" fill="#fff" stroke="#8c8c8c" stroke-width="1.3"/><circle cx="559.2" cy="548.3" r="4" fill="#fff" stroke="#8c8c8c" stroke-width="1.3"/><circle cx="620.4" cy="548.3" r="4" fill="#fff" stroke="#8c8c8c" stroke-width="1.3"/><circle cx="681.6" cy="548.3" r="4" fill="#fff" stroke="#8c8c8c" stroke-width="1.3"/><path d="M835.5 483.7V500.8" stroke="#9a9a9a" stroke-width="1.1"/><g transform="translate(834.6,473.9)" stroke="#8c8c8c" stroke-width="1.5" stroke-linejoin="round"><path d="M6.9 -3.2A7.6 7.6 0 1 0 6.2 4.4L3.4 2.4A4.2 4.2 0 1 1 3.8 -1.8z" fill="#fff"/><path d="M3.2 -2.2L12.8 -0.9L7.6 4.6z" fill="#fff"/><path d="M4.6 -1.2L6.4 1.6" stroke="#fff" stroke-width="1.8"/></g><circle cx="770.8" cy="504.8" r="4" fill="#fff" stroke="#8c8c8c" stroke-width="1.3"/><circle cx="835.5" cy="504.8" r="4" fill="#fff" stroke="#8c8c8c" stroke-width="1.3"/><circle cx="900.1" cy="504.8" r="4" fill="#fff" stroke="#8c8c8c" stroke-width="1.3"/><circle cx="770.8" cy="526.5" r="4" fill="#fff" stroke="#8c8c8c" stroke-width="1.3"/><circle cx="900.1" cy="526.5" r="4" fill="#fff" stroke="#8c8c8c" stroke-width="1.3"/><circle cx="770.8" cy="548.3" r="4" fill="#fff" stroke="#8c8c8c" stroke-width="1.3"/><circle cx="835.5" cy="548.3" r="4" fill="#fff" stroke="#8c8c8c" stroke-width="1.3"/><circle cx="900.1" cy="548.3" r="4" fill="#fff" stroke="#8c8c8c" stroke-width="1.3"/></g></svg>
<svg class="a" style="left:455px;top:69px" width="14" height="20"><path d="M0.5 0.5V14.5L3.8 11.4L6.3 16.5L8.4 15.6L6 10.6H10.5z" fill="#fff" stroke="#555" stroke-width="1"/></svg>
</div>

<!-- right scrollbar -->
<div class="a" style="left:1103px;top:129px;width:14px;height:458px;background:#dcdcdc"></div>
<div class="a" style="left:1103px;top:131px;width:12px;height:73px;background:#fff;border:1px solid #cfcfcf"></div>
<div class="a" style="left:1103.5px;top:143px;width:11px;height:1px;background:#dedede"></div>
<div class="a" style="left:1103px;top:575px;width:12px;height:12px;background:#fff"></div>
<svg class="a" style="left:1100px;top:128px" width="17" height="500" fill="#555">
 <path d="M4.8 9.5l3.2-3.2l3.2 3.2z"/>
 <path d="M4.8 452h6.4l-3.2 3.2z"/>
 <path d="M5.5 468.5l2.5-2.5l2.5 2.5M5.5 471.5l2.5-2.5l2.5 2.5" fill="none" stroke="#555" stroke-width="1.2"/>
 <path d="M5.5 479.5l2.5 2.5l2.5-2.5M5.5 482.5l2.5 2.5l2.5-2.5" fill="none" stroke="#555" stroke-width="1.2"/>
</svg>

<!-- STATUS BAR -->
<div class="a" style="left:0;top:637px;width:1117px;height:20px;background:#f1f1f1;border-top:1px solid #d9d9d9"></div>
<div class="a" style="left:0;top:656.5px;width:1117px;height:2px;background:#7d7d7d"></div>
<div class="t" style="left:5px;top:643px;font-size:9.6px;color:#555">Slide 1 of 7</div>
<svg class="a" style="left:0;top:636px" width="1117" height="22" fill="none" stroke="#666">
 <!-- spell check icon -->
 <path d="M72.5 4.5h5v11h-5zM77.5 6.5h5v4l-2.5 2.5h-2.5" stroke-width="1"/>
 <path d="M78.5 13.5l1.5 1.5l3-3" stroke-width="1"/>
 <!-- notes -->
 <path d="M686 9.5l2.5-2.6l2.5 2.6z" fill="#777" stroke="none"/>
 <path d="M684 11.5h9.5M684 14h9.5M685 16.5h7.5" stroke-width="1"/>
 <!-- comments -->
 <path d="M741.5 6.5h9.8v7.2h-4.5l-2.4 2.6v-2.6h-2.9z" fill="#6a6a6a" stroke="none"/>
 <!-- normal view highlight -->
 <rect x="817.7" y="3" width="32" height="17.5" fill="#d5d5d5" stroke="none"/>
 <rect x="828.5" y="5.3" width="11" height="11" stroke-width="1.1"/>
 <path d="M831.5 5.5v11M833.5 8.5h4M833.5 10.5h4M833.5 12.5h4" stroke-width="0.9"/>
 <!-- slide sorter -->
 <rect x="860.5" y="5.8" width="5" height="4" stroke-width="1"/><rect x="867.5" y="5.8" width="5" height="4" stroke-width="1"/>
 <rect x="860.5" y="12" width="5" height="4" stroke-width="1"/><rect x="867.5" y="12" width="5" height="4" stroke-width="1"/>
 <!-- reading -->
 <path d="M893.5 5.5h4.5v11h-4.5zM898 5.5h5.5v11h-5.5" stroke-width="1"/>
 <path d="M894.5 8h3M894.5 10h3M894.5 12h3M899 8h3.5M899 10h3.5M899 12h3.5" stroke-width="0.7"/>
 <!-- slideshow -->
 <path d="M926 6h11" stroke-width="1.6"/>
 <path d="M927.5 6.5v5.5h8v-5.5M931.5 12v3M929.5 16.5h4" stroke-width="1"/>
 <!-- zoom -->
 <path d="M952.2 11.3h6" stroke="#555" stroke-width="1.4"/>
 <path d="M961.2 11.3h84.7" stroke="#b4b4b4" stroke-width="1"/>
 <path d="M1004.3 9v5" stroke="#b4b4b4" stroke-width="0.8"/>
 <rect x="992.2" y="6.8" width="4" height="9" fill="#555" stroke="none"/>
 <path d="M1049.7 11.3h7.5M1053.45 7.5v7.5" stroke="#555" stroke-width="1.4"/>
 <!-- fit -->
 <rect x="1099.8" y="6.2" width="11" height="11" stroke="#777" stroke-width="1"/>
 <path d="M1102 8.5l2 2M1108.5 8.5l-2 2M1102 15l2-2M1108.5 15l-2-2" stroke="#777" stroke-width="1"/>
</svg>
<div class="t" style="left:698px;top:642.6px;font-size:9.6px;color:#555">Notes</div>
<div class="t" style="left:755.5px;top:642.6px;font-size:9.6px;color:#555">Comments</div>
<div class="t" style="left:1070px;top:642.6px;font-size:9.6px;color:#555">79%</div>

<!-- TASKBAR -->
<div class="a" style="left:1117px;top:0;width:53px;height:658px;background:#03070e"></div>
<div class="a" style="left:1117px;top:265.3px;width:51px;height:25.8px;background:#34363a"></div>
<div class="a" style="left:1168px;top:217px;width:2px;height:18px;background:#6aa0d8"></div>
<div class="a" style="left:1168px;top:242px;width:2px;height:22px;background:#6aa0d8"></div>
<div class="a" style="left:1168px;top:266px;width:2px;height:24px;background:#8ab8e8"></div>
<svg class="a" style="left:1117px;top:0" width="53" height="658" fill="none" stroke="#fff">
 <!-- windows logo -->
 <g fill="#fff" stroke="none">
  <path d="M19.3 6.8l5.8-0.8v6.2h-5.8z"/><path d="M26.2 5.8l7-1v7.4h-7z"/>
  <path d="M19.3 13.2h5.8v6.1l-5.8-0.8z"/><path d="M26.2 13.2h7v7.4l-7-1z"/>
 </g>
 <!-- cortana -->
 <circle cx="25.7" cy="38.3" r="6" stroke-width="1.9"/>
 <!-- task view -->
 <rect x="20.5" y="58.8" width="10.5" height="11.4" stroke-width="1.4"/>
 <path d="M18 61v7M33.5 61v7" stroke-width="1.3"/>
 <!-- edge -->
 <text x="18.2" y="99.6" font-family="Liberation Sans" font-size="24" font-weight="bold" fill="#2a74d0" stroke="none">e</text>
 <!-- explorer -->
 <path d="M19.5 113.5h5l1.5 1.5h7.5v9.5h-14z" fill="#f0cf6a" stroke="none"/>
 <rect x="21.5" y="118" width="10" height="5" fill="#5fb0c8" stroke="none"/>
 <!-- store -->
 <path d="M20 142.5h13v9.5h-13z" stroke-width="1.4"/>
 <path d="M23 142.5v-2.5h7v2.5" stroke-width="1.3"/>
 <g fill="#fff" stroke="none"><rect x="22.5" y="144.5" width="3.6" height="3"/><rect x="27" y="144.5" width="3.6" height="3"/><rect x="22.5" y="148.2" width="3.6" height="2.8"/><rect x="27" y="148.2" width="3.6" height="2.8"/></g>
 <!-- opera -->
 <ellipse cx="25.9" cy="171.3" rx="5.5" ry="6.8" stroke="#d3262e" stroke-width="3"/>
 <!-- facebook -->
 <rect x="20" y="192" width="13" height="13" fill="#3b5ea8" stroke="none"/>
 <path d="M29.5 195.3h-1.4c-1 0-1.6 0.6-1.6 1.7v8M25 199h4.3" stroke="#fff" stroke-width="1.6"/>
 <!-- notepad-ish -->
 <rect x="20.5" y="219.5" width="12" height="12.5" fill="#c8d8e8" stroke="none"/>
 <rect x="20.5" y="219.5" width="12" height="3" fill="#7aa0c0" stroke="none"/>
 <path d="M22.5 225h8M22.5 227.5h8M22.5 230h8" stroke="#8a9aaa" stroke-width="0.8"/>
 <!-- green -->
 <rect x="20" y="245" width="13" height="13" rx="1.5" fill="#7f9a3a" stroke="#b8c890" stroke-width="1"/>
 <path d="M23.5 248.5l3.5 3l-3.5 3M27.5 255h3" stroke="#fff" stroke-width="1.2"/>
 <!-- powerpoint -->
 <rect x="19" y="271" width="14" height="14" fill="#d24726" stroke="none"/>
 <rect x="27" y="273" width="6" height="10" fill="#f1a58c" stroke="none"/>
 <text x="19.8" y="282.8" font-family="Liberation Sans" font-size="10" font-weight="bold" fill="#fff" stroke="none">P</text>
 <!-- tray -->
 <path d="M17.2 488.6l-5 5l5 5" stroke-width="1.3"/>
 <rect x="12" y="511" width="8" height="6" stroke-width="1.1"/>
 <rect x="14" y="512.5" width="4" height="3" fill="#fff" stroke="none"/>
 <path d="M9 511v-2M11 511v-2M8.5 513.5h3" stroke-width="1"/>
 <circle cx="32.5" cy="515" r="3.2" fill="#d03040" stroke="none"/>
 <path d="M30.5 514l4 2M34.5 514l-4 2" stroke="#fff" stroke-width="0.8"/>
 <path d="M37 510.5v9M39 512v7" stroke="#777" stroke-width="1"/>
 <path d="M9 532.5h2.5l3.5-3v11l-3.5-3h-2.5z" stroke-width="1.1"/>
 <path d="M17 532.5c1 1.5 1 3.5 0 5M19 531c2 2.5 2 6 0 8.5" stroke-width="1"/>
 <path d="M21 563c1-3 3-6 5-8c2-2 5-3.5 6-2.5c1 1-1 3-3 4.5c-2 1.5-4 3-4.5 5c2-1 4-2 5.5-1M28 558l5-5" stroke-width="1.2"/>
 <!-- action center -->
 <path d="M21 626h12.5v9.5h-4.5l-2.5 2.5l-1-2.5h-4.5z" fill="#fff" stroke="none"/>
 <path d="M23.5 629h7.5M23.5 631h7.5M23.5 633h5" stroke="#03070e" stroke-width="0.9"/>
</svg>
<div class="t" style="left:1125px;top:584px;font-size:9.8px;color:#fff">9:03 PM</div>
<div class="t" style="left:1119px;top:598px;font-size:9.8px;color:#fff">10/19/2017</div>
<div class="a" style="left:1117px;top:656px;width:53px;height:2px;background:#777"></div>

</body></html>
